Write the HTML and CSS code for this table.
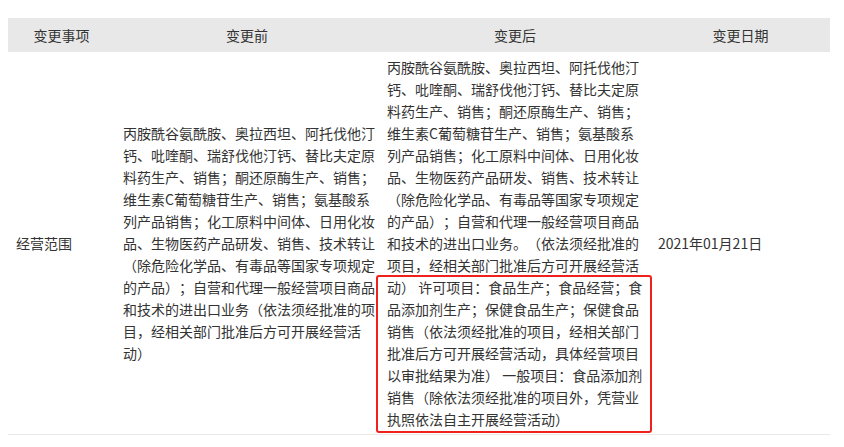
FILE: index.html
```html
<!DOCTYPE html>
<html lang="zh-CN">
<head>
<meta charset="utf-8">
<title>变更记录</title>
<link rel="stylesheet" href="styles.css">
</head>
<body>
<div class="wrap">
  <table class="change-table">
    <colgroup>
      <col class="c-item">
      <col class="c-before">
      <col class="c-after">
      <col class="c-date">
    </colgroup>
    <thead>
      <tr>
        <th>变更事项</th>
        <th>变更前</th>
        <th>变更后</th>
        <th>变更日期</th>
      </tr>
    </thead>
    <tbody>
      <tr>
        <td class="cell-item">经营范围</td>
        <td class="cell-before">丙胺酰谷氨酰胺、奥拉西坦、阿托伐他汀钙、吡喹酮、瑞舒伐他汀钙、替比夫定原料药生产、销售；酮还原酶生产、销售；维生素C葡萄糖苷生产、销售；氨基酸系列产品销售；化工原料中间体、日用化妆品、生物医药产品研发、销售、技术转让（除危险化学品、有毒品等国家专项规定的产品）；自营和代理一般经营项目商品和技术的进出口业务（依法须经批准的项目，经相关部门批准后方可开展经营活动）</td>
        <td class="cell-after">丙胺酰谷氨酰胺、奥拉西坦、阿托伐他汀钙、吡喹酮、瑞舒伐他汀钙、替比夫定原料药生产、销售；酮还原酶生产、销售；维生素C葡萄糖苷生产、销售；氨基酸系列产品销售；化工原料中间体、日用化妆品、生物医药产品研发、销售、技术转让（除危险化学品、有毒品等国家专项规定的产品）；自营和代理一般经营项目商品和技术的进出口业务。（依法须经批准的项目，经相关部门批准后方可开展经营活动） 许可项目：食品生产；食品经营；食品添加剂生产；保健食品生产；保健食品销售（依法须经批准的项目，经相关部门批准后方可开展经营活动，具体经营项目以审批结果为准） 一般项目：食品添加剂销售（除依法须经批准的项目外，凭营业执照依法自主开展经营活动）</td>
        <td class="cell-date">2021年01月21日</td>
      </tr>
    </tbody>
  </table>
  <div class="highlight"></div>
</div>
</body>
</html>
```

FILE: styles.css
```css
html, body {
  margin: 0;
  padding: 0;
  background: #ffffff;
}

body {
  margin: 8px;
  font-family: "Noto Sans CJK SC", "Microsoft YaHei", sans-serif;
  font-size: 14px;
  color: #333333;
  text-spacing-trim: space-all;
}

.wrap {
  position: relative;
  width: 822px;
  margin-top: 10px;
}

.change-table {
  width: 822px;
  table-layout: fixed;
  border-collapse: collapse;
  border-spacing: 0;
}

.c-item { width: 107px; }
.c-before { width: 264px; }
.c-after { width: 272px; }
.c-date { width: 179px; }

.change-table th {
  height: 34px;
  padding: 0;
  background: #e8e8e8;
  font-weight: normal;
  text-align: center;
  line-height: 34px;
  color: #333333;
}

.change-table td {
  vertical-align: middle;
  line-height: 22px;
  padding: 4px 0 4px 8px;
  text-align: left;
  border-bottom: 1px solid #e8e8e8;
  word-break: normal;
}

.change-table td.cell-after {
  padding-right: 8px;
}

.change-table td.cell-date {
  padding-left: 7px;
}

.highlight {
  position: absolute;
  left: 368px;
  top: 257px;
  width: 276px;
  height: 158px;
  box-sizing: border-box;
  border: 2px solid #f0201b;
  border-radius: 3px;
  pointer-events: none;
}
```
